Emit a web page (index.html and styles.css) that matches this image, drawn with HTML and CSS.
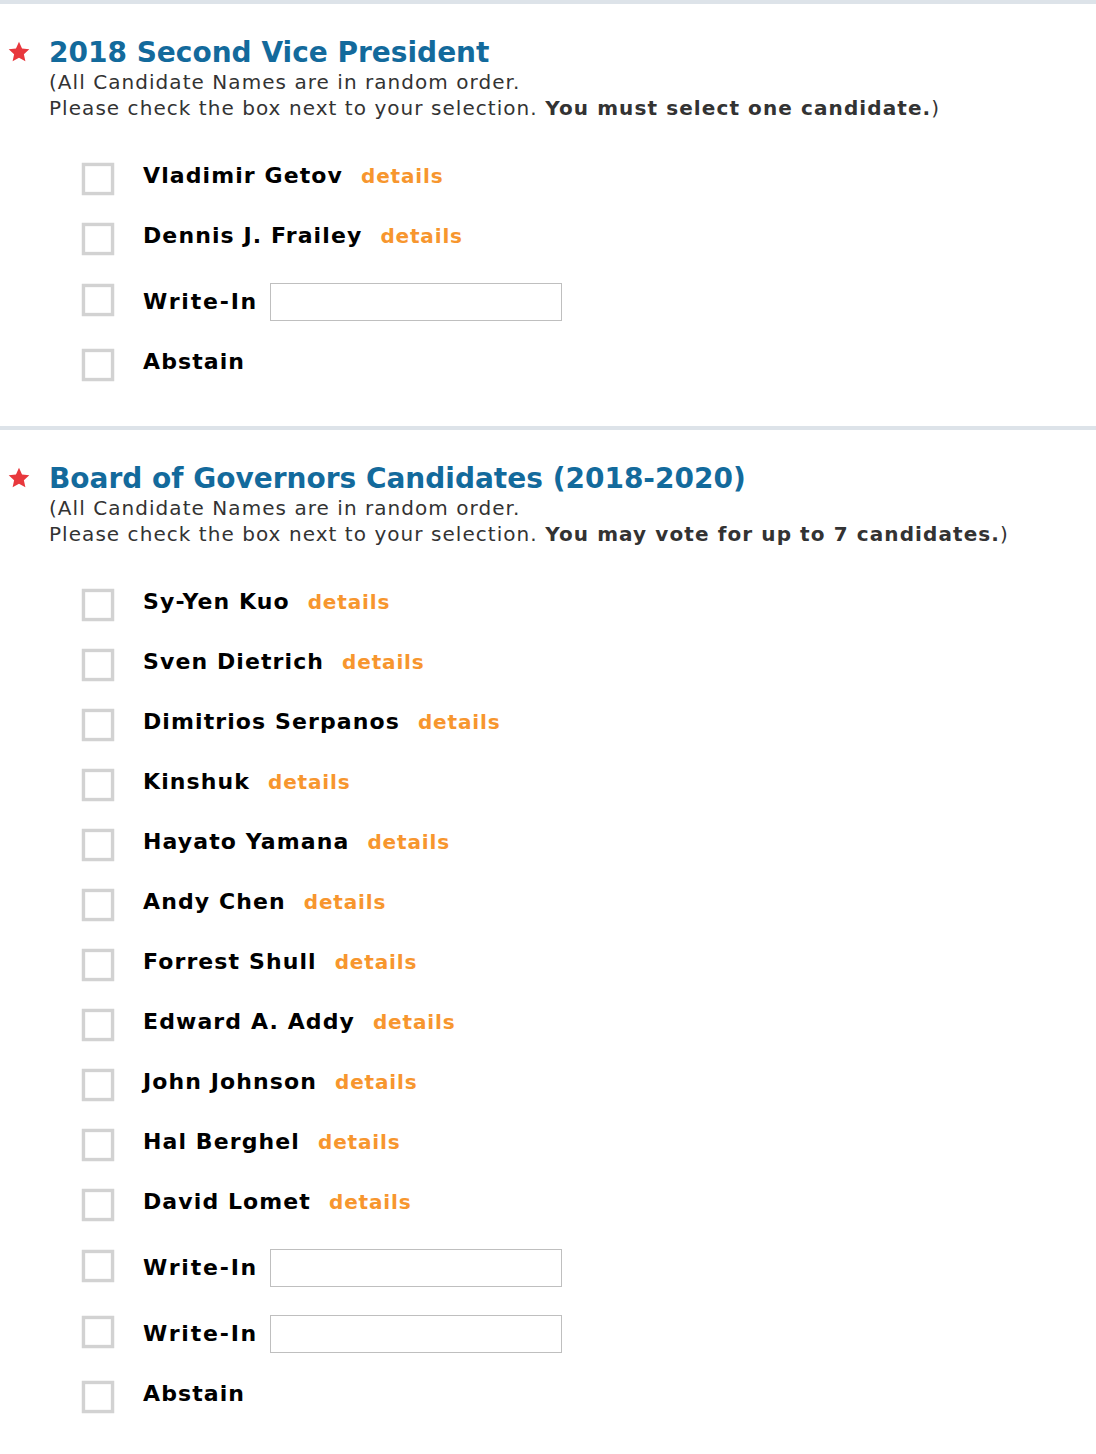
FILE: index.html
```html
<!DOCTYPE html>
<html>
<head>
<meta charset="utf-8">
<link rel="stylesheet" href="styles.css">
</head>
<body>
<section class="race">
  <div class="race-head">
    <svg class="star" viewBox="0 0 24 24"><path d="M12 2.5l2.8 6.2 6.7.7-5 4.6 1.4 6.6L12 17.2l-5.9 3.4 1.4-6.6-5-4.6 6.7-.7z" fill="#e8383d"/></svg>
    <div class="head-text">
      <h2 class="race-title">2018 Second Vice President</h2>
      <p class="race-note">(All Candidate Names are in random order.<br>Please check the box next to your selection. <b>You must select one candidate.</b>)</p>
    </div>
  </div>
  <ul class="choices">
    <li class="choice"><span class="box"></span><span class="name">Vladimir Getov</span><a class="details">details</a></li>
    <li class="choice"><span class="box"></span><span class="name">Dennis J. Frailey</span><a class="details">details</a></li>
    <li class="choice write"><span class="box"></span><span class="name">Write-In</span><span class="field"></span></li>
    <li class="choice"><span class="box"></span><span class="name">Abstain</span></li>
  </ul>
</section>
<section class="race">
  <div class="race-head">
    <svg class="star" viewBox="0 0 24 24"><path d="M12 2.5l2.8 6.2 6.7.7-5 4.6 1.4 6.6L12 17.2l-5.9 3.4 1.4-6.6-5-4.6 6.7-.7z" fill="#e8383d"/></svg>
    <div class="head-text">
      <h2 class="race-title">Board of Governors Candidates (2018-2020)</h2>
      <p class="race-note">(All Candidate Names are in random order.<br>Please check the box next to your selection. <b>You may vote for up to 7 candidates.</b>)</p>
    </div>
  </div>
  <ul class="choices">
    <li class="choice"><span class="box"></span><span class="name">Sy-Yen Kuo</span><a class="details">details</a></li>
    <li class="choice"><span class="box"></span><span class="name">Sven Dietrich</span><a class="details">details</a></li>
    <li class="choice"><span class="box"></span><span class="name">Dimitrios Serpanos</span><a class="details">details</a></li>
    <li class="choice"><span class="box"></span><span class="name">Kinshuk</span><a class="details">details</a></li>
    <li class="choice"><span class="box"></span><span class="name">Hayato Yamana</span><a class="details">details</a></li>
    <li class="choice"><span class="box"></span><span class="name">Andy Chen</span><a class="details">details</a></li>
    <li class="choice"><span class="box"></span><span class="name">Forrest Shull</span><a class="details">details</a></li>
    <li class="choice"><span class="box"></span><span class="name">Edward A. Addy</span><a class="details">details</a></li>
    <li class="choice"><span class="box"></span><span class="name">John Johnson</span><a class="details">details</a></li>
    <li class="choice"><span class="box"></span><span class="name">Hal Berghel</span><a class="details">details</a></li>
    <li class="choice"><span class="box"></span><span class="name">David Lomet</span><a class="details">details</a></li>
    <li class="choice write"><span class="box"></span><span class="name">Write-In</span><span class="field"></span></li>
    <li class="choice write"><span class="box"></span><span class="name">Write-In</span><span class="field"></span></li>
    <li class="choice"><span class="box"></span><span class="name">Abstain</span></li>
  </ul>
</section>
</body>
</html>
```

FILE: styles.css
```css
html, body {
  margin: 0;
  padding: 0;
  background: #fff;
}
body {
  font-family: "DejaVu Sans", Verdana, sans-serif;
  color: #333;
}
.race {
  border-top: 4px solid #dde3e9;
  padding: 33px 0 45px;
}
.race-head {
  display: flex;
  align-items: flex-start;
}
.star {
  margin: 2px 0 0 6px;
  width: 26px;
  height: 26px;
  flex: none;
}
.head-text {
  margin-left: 17px;
}
.race-title {
  margin: 0;
  font-size: 28px;
  line-height: 32px;
  font-weight: bold;
  color: #136a9c;
}
.race-note {
  margin: 0;
  font-size: 20px;
  line-height: 26px;
  letter-spacing: 1.05px;
}
.race-note b {
  font-weight: bold;
  letter-spacing: 1.1px;
}
.choices {
  list-style: none;
  margin: 42px 0 0;
  padding: 0;
  display: flex;
  flex-direction: column;
  gap: 28px;
}
.choice {
  display: flex;
  align-items: center;
  height: 32px;
  padding-left: 82px;
}
.choice.write {
  height: 38px;
}
.box {
  box-sizing: border-box;
  width: 32px;
  height: 32px;
  border: 3px solid #d2d2d2;
  box-shadow: inset 0 0 1px #bbb, 0 0 1px #bbb;
  flex: none;
}
.write .box {
  margin: -2px 0 2px;
}
.name {
  margin: -3px 0 3px 29px;
  font-size: 22px;
  line-height: 26px;
  font-weight: bold;
  letter-spacing: 1.1px;
  color: #000;
}
.write .name {
  margin: 0 0 0 29px;
  letter-spacing: 1.8px;
}
.details {
  margin: -3px 0 3px 18px;
  font-size: 20px;
  line-height: 26px;
  font-weight: bold;
  letter-spacing: 0.85px;
  color: #f7962e;
}
.field {
  box-sizing: border-box;
  margin-left: 12px;
  width: 292px;
  height: 38px;
  border: 1px solid #bfbfbf;
}
```
